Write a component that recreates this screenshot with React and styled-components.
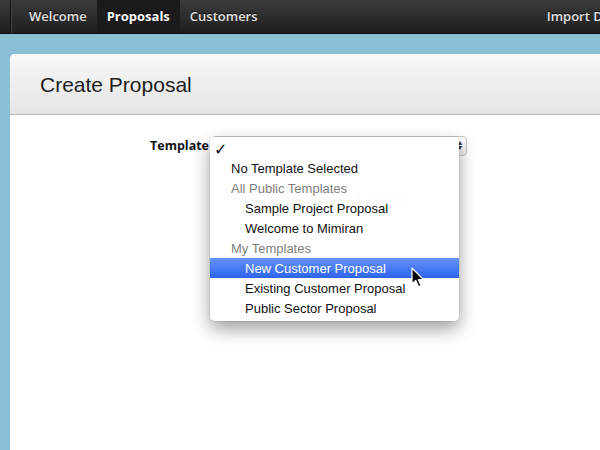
import styled, { createGlobalStyle } from "styled-components";

const GlobalStyle = createGlobalStyle`
  html, body {
    margin: 0;
    padding: 0;
    background: #8abfd7;
    overflow: hidden;
  }
`;

const Page = styled.div`
  width: 720px;
  min-height: 450px;
  display: flex;
  flex-direction: column;
`;

// top navigation
const NavBar = styled.div`
  display: flex;
  align-items: stretch;
  height: 33px;
  background: linear-gradient(#3c3c3c, #1e1e1e);
  border-bottom: 1px solid #0c0c0c;
  padding-left: 10px;
  font-family: "Open Sans", "DejaVu Sans", sans-serif;
  font-size: 13px;
`;

const NavGroup = styled.div`
  display: flex;
  align-items: stretch;
  border-left: 1px solid #111;
  box-shadow: inset 1px 0 0 #444;
  padding-left: 8px;
`;

const NavRight = styled.div`
  display: flex;
  margin-left: auto;
  padding-right: 87px;
`;

const NavItem = styled.div`
  display: flex;
  align-items: center;
  padding: 0 10px 1px;
  font-weight: ${(p) => (p.active ? 700 : 600)};
  color: ${(p) => (p.active ? "#ffffff" : "#e4e4e4")};
  background: ${(p) => (p.active ? "#1b1b1b" : "transparent")};
  text-shadow: 0 -1px 0 #000;
`;

const Content = styled.div`
  padding: 20px 0 0 10px;
  flex: 1;
  display: flex;
`;

const Card = styled.div`
  flex: 1;
  background: #fff;
  border-radius: 5px 0 0 0;
  min-height: 420px;
  display: flex;
  flex-direction: column;
`;

const CardHeader = styled.div`
  height: 60px;
  display: flex;
  align-items: center;
  padding-left: 30px;
  background: linear-gradient(#f8f8f8, #e5e5e5);
  border-bottom: 1px solid #b9b9b9;
  border-radius: 5px 0 0 0;
`;

const Title = styled.h1`
  margin: 0;
  font-family: "Liberation Sans", Arial, sans-serif;
  font-weight: 400;
  font-size: 21px;
  color: #1e1e1e;
  padding-top: 2px;
`;

const Form = styled.div`
  padding-top: 21px;
  display: grid;
  grid-template-columns: 199px 1fr;
  column-gap: 3px;
  row-gap: 32px;
`;

const Label = styled.div`
  text-align: right;
  font-family: "Open Sans", "DejaVu Sans", sans-serif;
  font-weight: 700;
  font-size: 12.5px;
  color: #111;
  padding-top: 1px;
`;

const Field = styled.div`
  position: relative;
  width: 255px;
`;

const SelectBox = styled.div`
  height: 18px;
  border: 1px solid #c8c8c8;
  border-radius: 4px;
  background: linear-gradient(#fff, #ededed);
  display: flex;
  justify-content: flex-end;
`;

const Stepper = styled.div`
  width: 12px;
  border-left: 1px solid #d0d0d0;
  display: flex;
  align-items: center;
  justify-content: center;
  font-size: 7px;
  line-height: 5px;
  color: #333;
  flex-direction: column;
`;

const Buttons = styled.div`
  grid-column: 2;
  display: flex;
  gap: 6px;
  padding-left: 6px;
`;

const Button = styled.div`
  height: 26px;
  width: ${(p) => p.w}px;
  border-radius: 4px;
  background: ${(p) => p.bg};
  font-family: "Liberation Sans", Arial, sans-serif;
  font-size: 12px;
  display: flex;
  align-items: center;
  justify-content: center;
  color: #c4c4c4;
`;

// popup menu lying over the select
const Menu = styled.div`
  position: absolute;
  left: -2px;
  top: 1px;
  width: 249px;
  padding: 1px 0 3px;
  background: rgba(255, 255, 255, 0.95);
  border-radius: 5px;
  box-shadow: 0 8px 18px rgba(0, 0, 0, 0.38), 0 0 0 1px rgba(0, 0, 0, 0.06);
  font-family: "Liberation Sans", Arial, sans-serif;
  font-size: 13px;
`;

const Row = styled.div`
  height: 20px;
  display: flex;
  align-items: center;
  padding-left: ${(p) => p.indent}px;
  color: ${(p) => (p.selected ? "#fff" : p.group ? "#7f7f7f" : "#111")};
  background: ${(p) =>
    p.selected ? "linear-gradient(#6592f7, #2e64ef)" : "transparent"};
`;

const Check = styled.span`
  font-family: "DejaVu Sans", sans-serif;
  font-size: 16px;
  font-weight: 700;
  color: #000;
  padding-top: 3px;
`;

const Cursor = styled.svg`
  position: absolute;
  left: 201px;
  top: 130px;
`;

const items = [
  { text: "No Template Selected", indent: 21 },
  { text: "All Public Templates", indent: 21, group: true },
  { text: "Sample Project Proposal", indent: 35 },
  { text: "Welcome to Mimiran", indent: 35 },
  { text: "My Templates", indent: 21, group: true },
  { text: "New Customer Proposal", indent: 35, selected: true },
  { text: "Existing Customer Proposal", indent: 35 },
  { text: "Public Sector Proposal", indent: 35 },
];

function App() {
  return (
    <Page>
      <GlobalStyle />
      <NavBar>
        <NavGroup>
          <NavItem>Welcome</NavItem>
          <NavItem active>Proposals</NavItem>
          <NavItem>Customers</NavItem>
        </NavGroup>
        <NavRight>
          <NavItem>Import Data</NavItem>
        </NavRight>
      </NavBar>
      <Content>
        <Card>
          <CardHeader>
            <Title>Create Proposal</Title>
          </CardHeader>
          <Form>
            <Label>Template</Label>
            <Field>
              <SelectBox>
                <Stepper>
                  <span>▲</span>
                  <span>▼</span>
                </Stepper>
              </SelectBox>
              <Menu>
                <Row indent={4}>
                  <Check>✓</Check>
                </Row>
                {items.map((item, i) => (
                  <Row
                    key={i}
                    indent={item.indent}
                    group={item.group}
                    selected={item.selected}
                  >
                    {item.text}
                  </Row>
                ))}
                <Cursor width="14" height="22" viewBox="0 0 14 22">
                  <path
                    d="M1 1 L1 17 L4.8 13.4 L7.6 19.8 L10 18.8 L7.3 12.6 L12.4 12.6 Z"
                    fill="#000"
                    stroke="#fff"
                    strokeWidth="1.2"
                    strokeLinejoin="round"
                  />
                </Cursor>
              </Menu>
            </Field>
            <Buttons>
              <Button bg="#dfe6bf" w={132}>Create</Button>
              <Button bg="#ebebeb" w={62}>Cancel</Button>
            </Buttons>
          </Form>
        </Card>
      </Content>
    </Page>
  );
}

export default App;
